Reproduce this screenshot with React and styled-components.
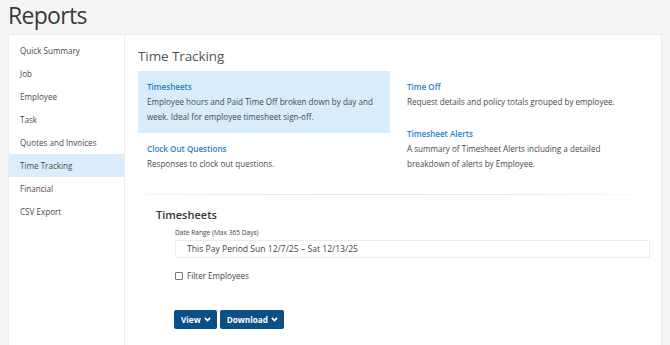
import React from 'react';
import styled, { createGlobalStyle } from 'styled-components';

const GlobalStyle = createGlobalStyle`
  html, body {
    margin: 0;
    padding: 0;
    background: #f5f5f5;
    font-family: 'Open Sans', 'Liberation Sans', sans-serif;
    color: #444;
  }
`;

const Page = styled.div`
  padding: 0 8px;
`;

const PageTitle = styled.h1`
  margin: 0;
  height: 32px;
  padding-top: 2px;
  font-size: 23px;
  font-weight: 400;
  line-height: 26px;
  color: #3a3a3a;
  letter-spacing: -0.7px;
`;

const Card = styled.div`
  display: flex;
  width: 654px;
  min-height: 330px;
  background: #fff;
  border: 1px solid #ececec;
  box-sizing: border-box;
`;

const Sidebar = styled.nav`
  width: 115px;
  flex-shrink: 0;
  padding-top: 4px;
  border-right: 1px solid #ececec;
`;

const NavItem = styled.div`
  height: 23px;
  line-height: 23px;
  padding-left: 11px;
  font-size: 8.1px;
  color: #4a4a4a;
  background: ${p => (p.$active ? '#dbedfc' : 'transparent')};
`;

const Main = styled.div`
  flex: 1;
  padding: 10px 13px 0 13px;
`;

const SectionTitle = styled.h2`
  margin: 0 0 4px 0;
  font-size: 13.5px;
  font-weight: 400;
  line-height: 22px;
  color: #555;
  letter-spacing: -0.1px;
`;

const ReportGrid = styled.div`
  display: flex;
  gap: 8px;
`;

const ReportColumn = styled.div`
  display: flex;
  flex-direction: column;
  width: ${p => p.$width}px;
`;

const ReportItem = styled.div`
  padding: 9px;
  background: ${p => (p.$active ? '#d9ecfc' : 'transparent')};
`;

const ReportName = styled.div`
  font-size: 8.1px;
  font-weight: 600;
  line-height: 14px;
  color: #1f7fcf;
`;

const ReportDesc = styled.div`
  font-size: 8.1px;
  line-height: 15px;
  color: #4a4a4a;
`;

// faded rule between the report list and the options form
const Divider = styled.div`
  height: 1px;
  margin: 14px 10px 0 8px;
  background: linear-gradient(to right, #f4f4f4, #e4e4e4 40%, #e8e8e8 70%, #fbfbfb);
`;

const FormBlock = styled.div`
  padding: 12px 0 0 18px;
`;

const FormTitle = styled.h3`
  margin: 0 0 5px 0;
  font-size: 11px;
  font-weight: 600;
  line-height: 16px;
  color: #333;
`;

const FormBody = styled.div`
  padding-left: 19px;
`;

const Label = styled.div`
  font-size: 6.6px;
  line-height: 10px;
  color: #444;
  margin-bottom: 2px;
`;

const DateInput = styled.div`
  height: 18px;
  width: 475px;
  box-sizing: border-box;
  border: 1px solid #ebebeb;
  border-radius: 2px;
  padding-left: 11px;
  font-size: 8.6px;
  line-height: 16px;
  color: #444;
`;

const CheckRow = styled.label`
  display: flex;
  align-items: center;
  gap: 4px;
  margin-top: 12px;
  font-size: 8.1px;
  color: #444;
`;

const Box = styled.span`
  width: 6px;
  height: 6px;
  border: 1px solid #777;
  border-radius: 1px;
  background: #fff;
`;

const Buttons = styled.div`
  display: flex;
  gap: 3px;
  margin-top: 29px;
  margin-left: -1px;
`;

const Button = styled.button`
  display: flex;
  align-items: center;
  gap: 3px;
  height: 19px;
  padding: 0 6px 0 7px;
  margin: 0;
  border: none;
  border-radius: 2px;
  background: #0b4f87;
  color: #fff;
  font-family: 'Open Sans', 'Liberation Sans', sans-serif;
  font-size: 8.2px;
  font-weight: 700;
`;

const Chevron = () => (
  <svg width="7" height="5" viewBox="0 0 7 5">
    <path d="M0.9 0.9l2.6 2.6L6.1 0.9" stroke="#fff" strokeWidth="1.7" fill="none" />
  </svg>
);

const navItems = ['Quick Summary', 'Job', 'Employee', 'Task', 'Quotes and Invoices', 'Time Tracking', 'Financial', 'CSV Export'];

const leftReports = [
  { name: 'Timesheets', desc: 'Employee hours and Paid Time Off broken down by day and week. Ideal for employee timesheet sign-off.', active: true },
  { name: 'Clock Out Questions', desc: 'Responses to clock out questions.' },
];

const rightReports = [
  { name: 'Time Off', desc: 'Request details and policy totals grouped by employee.' },
  { name: 'Timesheet Alerts', desc: 'A summary of Timesheet Alerts including a detailed breakdown of alerts by Employee.' },
];

export default function App() {
  return (
    <Page>
      <GlobalStyle />
      <PageTitle>Reports</PageTitle>
      <Card>
        <Sidebar>
          {navItems.map(item => (
            <NavItem key={item} $active={item === 'Time Tracking'}>
              {item}
            </NavItem>
          ))}
        </Sidebar>
        <Main>
          <SectionTitle>Time Tracking</SectionTitle>
          <ReportGrid>
            <ReportColumn $width={252}>
              {leftReports.map(r => (
                <ReportItem key={r.name} $active={r.active}>
                  <ReportName>{r.name}</ReportName>
                  <ReportDesc>{r.desc}</ReportDesc>
                </ReportItem>
              ))}
            </ReportColumn>
            <ReportColumn $width={250}>
              {rightReports.map(r => (
                <ReportItem key={r.name}>
                  <ReportName>{r.name}</ReportName>
                  <ReportDesc>{r.desc}</ReportDesc>
                </ReportItem>
              ))}
            </ReportColumn>
          </ReportGrid>
          <Divider />
          <FormBlock>
            <FormTitle>Timesheets</FormTitle>
            <FormBody>
              <Label>Date Range (Max 365 Days)</Label>
              <DateInput>This Pay Period Sun 12/7/25 – Sat 12/13/25</DateInput>
              <CheckRow>
                <Box />
                Filter Employees
              </CheckRow>
              <Buttons>
                <Button>View<Chevron /></Button>
                <Button>Download<Chevron /></Button>
              </Buttons>
            </FormBody>
          </FormBlock>
        </Main>
      </Card>
    </Page>
  );
}
